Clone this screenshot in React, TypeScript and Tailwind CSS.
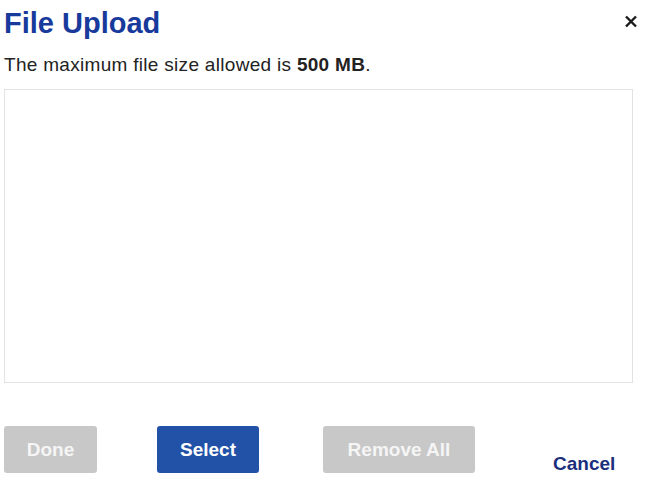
const BTN_BASE =
  "h-[47px] rounded-[3px] text-[19px] font-bold leading-none flex items-center justify-center";

export default function App() {
  return (
    <div
      className="w-[655px] h-[492px] bg-white relative"
      style={{ fontFamily: '"Liberation Sans", Arial, sans-serif' }}
    >
      <div className="pl-[4px] pt-[9px]">
        {/* Header */}
        <h1 className="text-[29px] leading-[29px] font-bold text-[#173a9c]">File Upload</h1>
        <p className="mt-[17px] text-[19px] leading-[19px] tracking-[0.3px] text-[#222222]">
          The maximum file size allowed is <strong className="font-bold">500 MB</strong>.
        </p>

        {/* Drop area */}
        <div className="mt-[15px] w-[629px] h-[294px] border border-[#e2e2e2] bg-white" />

        {/* Actions */}
        <div className="mt-[43px] flex items-start">
          <button className={`${BTN_BASE} w-[93px] bg-[#c8c8c8] text-[#f5f5f5]`}>Done</button>
          <button className={`${BTN_BASE} ml-[60px] w-[102px] bg-[#2251a8] text-white`}>Select</button>
          <button className={`${BTN_BASE} ml-[64px] w-[152px] bg-[#c8c8c8] text-[#f5f5f5]`}>
            Remove All
          </button>
          <button className="ml-[78px] mt-[28px] text-[19px] leading-[19px] font-bold text-[#1b2f7c]">
            Cancel
          </button>
        </div>
      </div>

      {/* Close */}
      <button className="absolute left-[624px] top-[15px] w-[14px] h-[13px]" aria-label="Close">
        <svg viewBox="0 0 14 13" className="w-[14px] h-[13px]">
          <path d="M2 1.5 L12 11.5 M12 1.5 L2 11.5" stroke="#1a1a1a" strokeWidth="2.4" strokeLinecap="butt" />
        </svg>
      </button>
    </div>
  );
}
